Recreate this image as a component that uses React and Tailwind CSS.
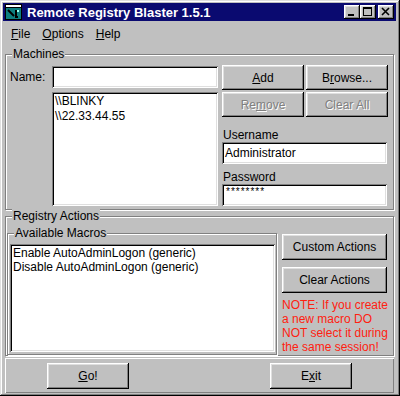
import React from "react";

const raised =
  "bg-[#c0c0c0] shadow-[inset_-1px_-1px_#000,inset_1px_1px_#fff,inset_-2px_-2px_#808080,inset_2px_2px_#dfdfdf]";
const sunken =
  "bg-white shadow-[inset_1px_1px_#808080,inset_-1px_-1px_#fff,inset_2px_2px_#000,inset_-2px_-2px_#dfdfdf]";
const disabled = "text-[#808080] [text-shadow:1px_1px_0_#fff]";

const Button = ({ className = "", children }) => (
  <div className={`${raised} flex items-center justify-center text-[12px] ${className}`}>
    {children}
  </div>
);

const Group = ({ label, className = "", children }) => (
  <div
    className={`relative border border-[#808080] shadow-[1px_1px_0_#fff,inset_1px_1px_0_#fff] ${className}`}
  >
    <span className="absolute -top-[8px] left-[6px] bg-[#c0c0c0] px-[1px] leading-[14px]">
      {label}
    </span>
    {children}
  </div>
);

const TitleButton = ({ children, className = "" }) => (
  <div className={`${raised} w-[16px] h-[14px] flex items-center justify-center ${className}`}>
    <svg width="16" height="14" viewBox="0 0 16 14">
      {children}
    </svg>
  </div>
);

const App = () => {
  return (
    <div className="w-[400px] h-[396px] bg-[#c0c0c0] pt-[3px] pl-[3px] pr-[4px] pb-[3px] flex flex-col shadow-[inset_-1px_-1px_#000,inset_1px_1px_#dfdfdf,inset_-2px_-2px_#808080,inset_2px_2px_#fff] font-['Liberation_Sans',Arial,sans-serif] text-[12px] text-black">
      {/* title bar */}
      <div className="h-[18px] bg-[#0a0a70] flex items-center pl-[2px] pr-[2px]">
        <svg width="17" height="16" viewBox="0 0 17 16">
          <rect x="0.5" y="0.5" width="16" height="15" fill="#0e7f7f" stroke="#000" />
          <rect x="1" y="1" width="15" height="2" fill="#fff" />
          <rect x="1" y="3" width="15" height="1" fill="#000" />
          <path d="M3 6 L9 12" stroke="#000" strokeWidth="2" />
          <path d="M11 6 L11 13 L13 13" stroke="#000" strokeWidth="2" fill="none" />
          <rect x="12" y="6" width="2" height="2" fill="#9fe" />
        </svg>
        <span className="ml-[5px] text-white font-bold text-[13px] leading-none">
          Remote Registry Blaster 1.5.1
        </span>
        <div className="ml-auto flex">
          <TitleButton>
            <rect x="4" y="9" width="6" height="2" fill="#000" />
          </TitleButton>
          <TitleButton>
            <rect x="3.5" y="2.5" width="8" height="8" fill="none" stroke="#000" />
            <rect x="3" y="2" width="9" height="2" fill="#000" />
          </TitleButton>
          <TitleButton className="ml-[2px]">
            <path d="M4 3 L11 10 M11 3 L4 10" stroke="#000" strokeWidth="1.6" />
          </TitleButton>
        </div>
      </div>

      {/* menu */}
      <div className="h-[20px] mt-[3px] flex items-center gap-[12px] pl-[8px]">
        <span><span className="underline">F</span>ile</span>
        <span><span className="underline">O</span>ptions</span>
        <span><span className="underline">H</span>elp</span>
      </div>

      {/* machines */}
      <Group label="Machines" className="mt-[10px] ml-[2px] w-[389px] pt-[10px] pb-[3px] pl-[4px] flex">
        <div className="w-[42px] mt-[1px] h-[22px] flex items-center">Name:</div>
        <div className="w-[166px] mt-[1px] flex flex-col">
          <div className={`${sunken} h-[22px]`}></div>
          <div className={`${sunken} h-[114px] mt-[4px] pl-[3px] pt-[2px] leading-[15px]`}>
            <div>\\BLINKY</div>
            <div>\\22.33.44.55</div>
          </div>
        </div>
        <div className="ml-[4px] w-[166px] flex flex-col">
          <div className="flex gap-[2px]">
            <Button className="w-[82px] h-[25px]">
              <span><span className="underline">A</span>dd</span>
            </Button>
            <Button className="w-[82px] h-[25px]">
              <span>B<span className="underline">r</span>owse...</span>
            </Button>
          </div>
          <div className="flex gap-[2px] mt-[2px]">
            <Button className="w-[82px] h-[25px]">
              <span className={disabled}>Re<span className="underline">m</span>ove</span>
            </Button>
            <Button className="w-[82px] h-[25px]">
              <span className={disabled}>Clear All</span>
            </Button>
          </div>
          <div className="mt-[11px] h-[14px] leading-[14px] pl-[1px]">Username</div>
          <div className={`${sunken} h-[22px] w-[165px] flex items-center pl-[3px]`}>Administrator</div>
          <div className="mt-[6px] h-[14px] leading-[14px] pl-[1px]">Password</div>
          <div className={`${sunken} h-[22px] w-[165px] pl-[4px] pt-[3px] text-[10px] leading-[10px] tracking-[1px]`}>
            ********
          </div>
        </div>
      </Group>

      {/* registry actions */}
      <Group label="Registry Actions" className="mt-[6px] ml-[2px] w-[389px] pt-[16px] flex">
        <Group label="Available Macros" className="ml-[1px] w-[270px] h-[122px] pt-[10px] pl-[2px]">
          <div className={`${sunken} w-[265px] h-[108px] pl-[3px] pt-[2px] leading-[14px]`}>
            <div>Enable AutoAdminLogon (generic)</div>
            <div>Disable AutoAdminLogon (generic)</div>
          </div>
        </Group>
        <div className="ml-[5px] -mt-[16px] pt-[17px] flex flex-col">
          <Button className="w-[105px] h-[26px]">Custom Actions</Button>
          <Button className="w-[105px] h-[26px] mt-[7px]">Clear Actions</Button>
          <div className="mt-[5px] text-[#ff2010] leading-[14px] whitespace-nowrap">
            <div>NOTE: If you create</div>
            <div>a new macro DO</div>
            <div>NOT select it during</div>
            <div>the same session!</div>
          </div>
        </div>
      </Group>

      {/* bottom panel */}
      <div className="mt-[2px] ml-[2px] w-[389px] flex-1 shadow-[inset_1px_1px_#fff,inset_-1px_-1px_#808080] pt-[5px] pl-[42px] flex">
        <Button className="w-[82px] h-[26px]">
          <span><span className="underline">G</span>o!</span>
        </Button>
        <Button className="w-[82px] h-[26px] ml-[141px]">
          <span>E<span className="underline">x</span>it</span>
        </Button>
      </div>
    </div>
  );
};

export default App;
